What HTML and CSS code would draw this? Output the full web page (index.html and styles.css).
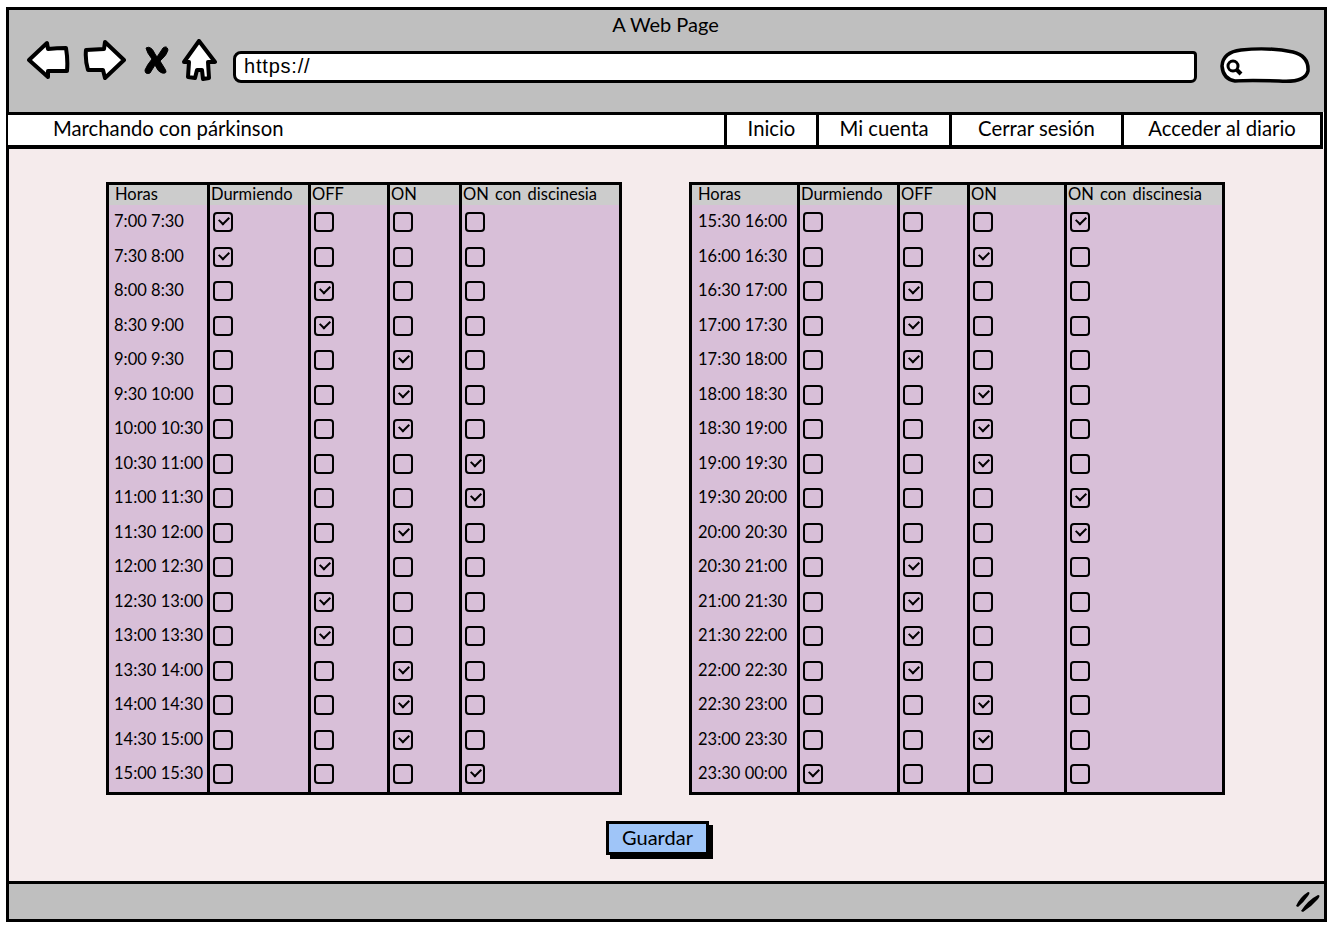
FILE: index.html
```html
<!DOCTYPE html>
<html lang="es">

<head>
    <meta charset="UTF-8">
    <title>A Web Page</title>
    <link rel="stylesheet" href="styles.css">
</head>

<body>
    <div class="window">
        <header class="chrome">
            <div class="chrome-title">A Web Page</div>
            <div class="toolbar">
                <svg class="icon icon-back" width="44" height="40" viewBox="0 0 44 40"><path d="M2 20 L20 3 L21 9 Q30 8 39 8 Q41 20 40 31 L21 31 L21 37 Z"/></svg>
                <svg class="icon icon-forward" width="44" height="42" viewBox="0 0 44 42"><path d="M3 11 L21 10 L22 3 L41 21 L22 39 L20 31 L5 31 Q2 21 3 11 Z"/></svg>
                <svg class="icon icon-stop" width="26" height="30" viewBox="0 0 26 30"><path d="M2 3 Q7 0 11 9 L13 12 L19 3 Q23 0 24 5 Q23 10 16 16 L21 24 Q24 29 18 28 Q14 27 11 20 L6 28 Q1 30 1 25 Q3 20 8 14 Q3 8 2 3 Z"/></svg>
                <svg class="icon icon-home" width="36" height="42" viewBox="0 0 36 42"><path d="M17 2 L33 23 L26 23 L27 39 L21 40 L20 31 L15 31 L13 39 L6 38 L7 23 L2 23 Z"/></svg>
                <div class="url-bar">https://</div>
                <svg class="icon-search" width="92" height="38" viewBox="0 0 92 38">
                    <path class="search-pill" d="M3 19 Q4 5 22 3 Q50 0 74 5 Q90 9 89 24 Q86 36 60 34 Q30 33 16 34 Q4 32 3 19 Z"/>
                    <circle class="search-lens" cx="14" cy="19" r="5"/>
                    <path class="search-handle" d="M18 23 L22 27"/>
                </svg>
            </div>
        </header>

        <nav class="nav">
            <div class="nav-brand">Marchando con párkinson</div>
            <a class="nav-item nav-inicio">Inicio</a>
            <a class="nav-item nav-cuenta">Mi cuenta</a>
            <a class="nav-item nav-cerrar">Cerrar sesión</a>
            <a class="nav-item nav-diario">Acceder al diario</a>
        </nav>

        <main class="content">
            <div class="sheets">
                <div class="sheet sheet-left">
                    <div class="head">Horas</div><div class="head">Durmiendo</div><div class="head">OFF</div><div class="head">ON</div><div class="head">ON con discinesia</div>
                    <div class="hour">7:00 7:30</div><div class="cell"><input type="checkbox" checked></div><div class="cell"><input type="checkbox"></div><div class="cell"><input type="checkbox"></div><div class="cell"><input type="checkbox"></div>
                    <div class="hour">7:30 8:00</div><div class="cell"><input type="checkbox" checked></div><div class="cell"><input type="checkbox"></div><div class="cell"><input type="checkbox"></div><div class="cell"><input type="checkbox"></div>
                    <div class="hour">8:00 8:30</div><div class="cell"><input type="checkbox"></div><div class="cell"><input type="checkbox" checked></div><div class="cell"><input type="checkbox"></div><div class="cell"><input type="checkbox"></div>
                    <div class="hour">8:30 9:00</div><div class="cell"><input type="checkbox"></div><div class="cell"><input type="checkbox" checked></div><div class="cell"><input type="checkbox"></div><div class="cell"><input type="checkbox"></div>
                    <div class="hour">9:00 9:30</div><div class="cell"><input type="checkbox"></div><div class="cell"><input type="checkbox"></div><div class="cell"><input type="checkbox" checked></div><div class="cell"><input type="checkbox"></div>
                    <div class="hour">9:30 10:00</div><div class="cell"><input type="checkbox"></div><div class="cell"><input type="checkbox"></div><div class="cell"><input type="checkbox" checked></div><div class="cell"><input type="checkbox"></div>
                    <div class="hour">10:00 10:30</div><div class="cell"><input type="checkbox"></div><div class="cell"><input type="checkbox"></div><div class="cell"><input type="checkbox" checked></div><div class="cell"><input type="checkbox"></div>
                    <div class="hour">10:30 11:00</div><div class="cell"><input type="checkbox"></div><div class="cell"><input type="checkbox"></div><div class="cell"><input type="checkbox"></div><div class="cell"><input type="checkbox" checked></div>
                    <div class="hour">11:00 11:30</div><div class="cell"><input type="checkbox"></div><div class="cell"><input type="checkbox"></div><div class="cell"><input type="checkbox"></div><div class="cell"><input type="checkbox" checked></div>
                    <div class="hour">11:30 12:00</div><div class="cell"><input type="checkbox"></div><div class="cell"><input type="checkbox"></div><div class="cell"><input type="checkbox" checked></div><div class="cell"><input type="checkbox"></div>
                    <div class="hour">12:00 12:30</div><div class="cell"><input type="checkbox"></div><div class="cell"><input type="checkbox" checked></div><div class="cell"><input type="checkbox"></div><div class="cell"><input type="checkbox"></div>
                    <div class="hour">12:30 13:00</div><div class="cell"><input type="checkbox"></div><div class="cell"><input type="checkbox" checked></div><div class="cell"><input type="checkbox"></div><div class="cell"><input type="checkbox"></div>
                    <div class="hour">13:00 13:30</div><div class="cell"><input type="checkbox"></div><div class="cell"><input type="checkbox" checked></div><div class="cell"><input type="checkbox"></div><div class="cell"><input type="checkbox"></div>
                    <div class="hour">13:30 14:00</div><div class="cell"><input type="checkbox"></div><div class="cell"><input type="checkbox"></div><div class="cell"><input type="checkbox" checked></div><div class="cell"><input type="checkbox"></div>
                    <div class="hour">14:00 14:30</div><div class="cell"><input type="checkbox"></div><div class="cell"><input type="checkbox"></div><div class="cell"><input type="checkbox" checked></div><div class="cell"><input type="checkbox"></div>
                    <div class="hour">14:30 15:00</div><div class="cell"><input type="checkbox"></div><div class="cell"><input type="checkbox"></div><div class="cell"><input type="checkbox" checked></div><div class="cell"><input type="checkbox"></div>
                    <div class="hour">15:00 15:30</div><div class="cell"><input type="checkbox"></div><div class="cell"><input type="checkbox"></div><div class="cell"><input type="checkbox"></div><div class="cell"><input type="checkbox" checked></div>
                </div>

                <div class="sheet sheet-right">
                    <div class="head">Horas</div><div class="head">Durmiendo</div><div class="head">OFF</div><div class="head">ON</div><div class="head">ON con discinesia</div>
                    <div class="hour">15:30 16:00</div><div class="cell"><input type="checkbox"></div><div class="cell"><input type="checkbox"></div><div class="cell"><input type="checkbox"></div><div class="cell"><input type="checkbox" checked></div>
                    <div class="hour">16:00 16:30</div><div class="cell"><input type="checkbox"></div><div class="cell"><input type="checkbox"></div><div class="cell"><input type="checkbox" checked></div><div class="cell"><input type="checkbox"></div>
                    <div class="hour">16:30 17:00</div><div class="cell"><input type="checkbox"></div><div class="cell"><input type="checkbox" checked></div><div class="cell"><input type="checkbox"></div><div class="cell"><input type="checkbox"></div>
                    <div class="hour">17:00 17:30</div><div class="cell"><input type="checkbox"></div><div class="cell"><input type="checkbox" checked></div><div class="cell"><input type="checkbox"></div><div class="cell"><input type="checkbox"></div>
                    <div class="hour">17:30 18:00</div><div class="cell"><input type="checkbox"></div><div class="cell"><input type="checkbox" checked></div><div class="cell"><input type="checkbox"></div><div class="cell"><input type="checkbox"></div>
                    <div class="hour">18:00 18:30</div><div class="cell"><input type="checkbox"></div><div class="cell"><input type="checkbox"></div><div class="cell"><input type="checkbox" checked></div><div class="cell"><input type="checkbox"></div>
                    <div class="hour">18:30 19:00</div><div class="cell"><input type="checkbox"></div><div class="cell"><input type="checkbox"></div><div class="cell"><input type="checkbox" checked></div><div class="cell"><input type="checkbox"></div>
                    <div class="hour">19:00 19:30</div><div class="cell"><input type="checkbox"></div><div class="cell"><input type="checkbox"></div><div class="cell"><input type="checkbox" checked></div><div class="cell"><input type="checkbox"></div>
                    <div class="hour">19:30 20:00</div><div class="cell"><input type="checkbox"></div><div class="cell"><input type="checkbox"></div><div class="cell"><input type="checkbox"></div><div class="cell"><input type="checkbox" checked></div>
                    <div class="hour">20:00 20:30</div><div class="cell"><input type="checkbox"></div><div class="cell"><input type="checkbox"></div><div class="cell"><input type="checkbox"></div><div class="cell"><input type="checkbox" checked></div>
                    <div class="hour">20:30 21:00</div><div class="cell"><input type="checkbox"></div><div class="cell"><input type="checkbox" checked></div><div class="cell"><input type="checkbox"></div><div class="cell"><input type="checkbox"></div>
                    <div class="hour">21:00 21:30</div><div class="cell"><input type="checkbox"></div><div class="cell"><input type="checkbox" checked></div><div class="cell"><input type="checkbox"></div><div class="cell"><input type="checkbox"></div>
                    <div class="hour">21:30 22:00</div><div class="cell"><input type="checkbox"></div><div class="cell"><input type="checkbox" checked></div><div class="cell"><input type="checkbox"></div><div class="cell"><input type="checkbox"></div>
                    <div class="hour">22:00 22:30</div><div class="cell"><input type="checkbox"></div><div class="cell"><input type="checkbox" checked></div><div class="cell"><input type="checkbox"></div><div class="cell"><input type="checkbox"></div>
                    <div class="hour">22:30 23:00</div><div class="cell"><input type="checkbox"></div><div class="cell"><input type="checkbox"></div><div class="cell"><input type="checkbox" checked></div><div class="cell"><input type="checkbox"></div>
                    <div class="hour">23:00 23:30</div><div class="cell"><input type="checkbox"></div><div class="cell"><input type="checkbox"></div><div class="cell"><input type="checkbox" checked></div><div class="cell"><input type="checkbox"></div>
                    <div class="hour">23:30 00:00</div><div class="cell"><input type="checkbox" checked></div><div class="cell"><input type="checkbox"></div><div class="cell"><input type="checkbox"></div><div class="cell"><input type="checkbox"></div>
                </div>
            </div>

            <button class="save">Guardar</button>
        </main>

        <footer class="status">
            <svg width="26" height="22" viewBox="0 0 26 22"><path d="M1 15 Q5 6 13 1 Q16 1 13 5 Q8 12 3 16 Z M6 20 Q13 9 23 4 Q26 4 23 8 Q16 16 8 21 Z"/></svg>
        </footer>
    </div>
</body>

</html>
```

FILE: styles.css
```css
body {
    margin: 0;
    background-color: white;
    color: black;
    font-family: 'Lato', 'Noto Sans', sans-serif;
}

.window {
    box-sizing: border-box;
    width: 1321px;
    height: 915px;
    margin: 7px 0 0 6px;
    border: 3px solid black;
    display: flex;
    flex-direction: column;
}

/* browser chrome */
.chrome {
    height: 102px;
    background-color: #bfbfbf;
}

.chrome-title {
    padding-top: 2px;
    text-align: center;
    font-size: 20px;
    line-height: 24px;
    margin-right: 2px;
}

.toolbar {
    display: flex;
    align-items: center;
    height: 48px;
    margin-top: 3px;
    padding-left: 18px;
}

.icon {
    margin-top: -6px;
}

.icon path {
    fill: white;
    stroke: black;
    stroke-width: 4;
    stroke-linejoin: round;
}

.icon-forward {
    margin-left: 12px;
}

.icon-stop {
    margin-left: 17px;
}

.icon-stop path {
    fill: black;
    stroke-width: 1;
}

.icon-home {
    margin-left: 12px;
}

.url-bar {
    box-sizing: border-box;
    width: 964px;
    height: 32px;
    margin: 8px 0 0 15px;
    padding-left: 8px;
    background-color: white;
    border: 3px solid black;
    border-radius: 8px 4px 6px 8px;
    font-family: 'Liberation Sans', sans-serif;
    font-size: 20px;
    letter-spacing: 0.8px;
    line-height: 25px;
}

.icon-search {
    margin: 6px 0 0 22px;
}

.search-pill {
    fill: white;
    stroke: black;
    stroke-width: 3.5;
}

.search-lens {
    fill: none;
    stroke: black;
    stroke-width: 3;
}

.search-handle {
    stroke: black;
    stroke-width: 4;
}

/* nav */
.nav {
    display: flex;
    margin: 0 1px 0 -3px;
    height: 37px;
    box-sizing: border-box;
    background-color: white;
    border-top: 3px solid black;
    border-bottom: 4px solid black;
    border-left: 2px solid black;
    border-right: 3px solid black;
    font-size: 20.3px;
    line-height: 26px;
}

.nav-brand {
    flex: 1;
    padding-left: 45px;
}

.nav-item {
    text-align: center;
    border-left: 3px solid black;
}

.nav-inicio {
    width: 89px;
}

.nav-cuenta {
    width: 130px;
}

.nav-cerrar {
    width: 169px;
}

.nav-diario {
    width: 196px;
}

/* main area */
.content {
    flex: 1;
    background-color: #f5ebec;
    display: flex;
    flex-direction: column;
    padding: 33px 0 0 97px;
}

.sheets {
    display: flex;
    gap: 67px;
}

.sheet {
    display: grid;
    grid-template-rows: 20px repeat(17, 34.5px);
    border: 3px solid black;
    background-color: #d8bfd8;
    font-size: 16.5px;
}

.sheet-left {
    grid-template-columns: 98px 101px 79px 72px 160px;
}

.sheet-right {
    grid-template-columns: 105px 100px 70px 97px 158px;
}

.head {
    background-color: #cccccc;
    padding-left: 1px;
    font-size: 16.5px;
    word-spacing: 2px;
    line-height: 18px;
    white-space: nowrap;
    border-left: 3px solid black;
}

.head:nth-child(5n+1) {
    border-left: 0;
    padding-left: 6px;
}

.hour {
    padding-left: 5px;
    line-height: 33px;
    white-space: nowrap;
}

.sheet-right .hour {
    padding-left: 6px;
}

.cell {
    border-left: 3px solid black;
    padding: 7px 0 0 3px;
}

.cell input {
    appearance: none;
    display: block;
    box-sizing: border-box;
    width: 20px;
    height: 20px;
    margin: 0;
    border: 2px solid black;
    border-radius: 4px;
    position: relative;
}

.cell input:checked::after {
    content: "";
    position: absolute;
    left: 4px;
    top: 2px;
    width: 8px;
    height: 5px;
    border-left: 2px solid black;
    border-bottom: 2px solid black;
    transform: rotate(-45deg);
}

.save {
    align-self: flex-start;
    box-sizing: border-box;
    width: 103px;
    height: 34px;
    margin: 26px 0 0 500px;
    padding: 0 0 2px;
    background-color: #9fc5f8;
    border: 3px solid black;
    box-shadow: 4px 4px 0 black;
    font-family: inherit;
    font-size: 20px;
    color: black;
}

/* footer */
.status {
    height: 35px;
    background-color: #bfbfbf;
    border-top: 3px solid black;
    display: flex;
    justify-content: flex-end;
    align-items: center;
    padding-right: 3px;
}
```
